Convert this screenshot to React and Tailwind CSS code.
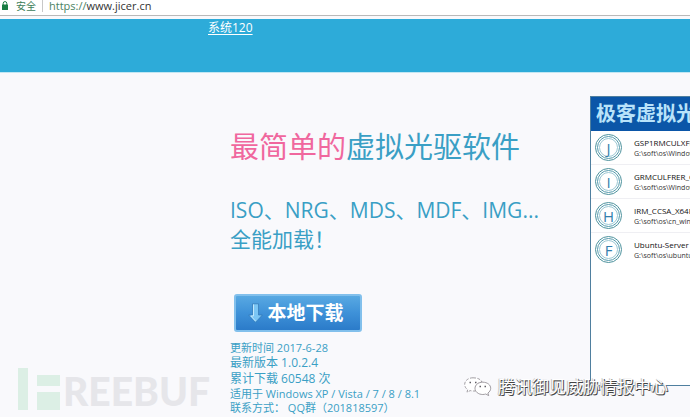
import React from 'react';

const images = [
  { letter: 'J', name: 'GSP1RMCULXFRER_CN_DVD', path: 'G:\\soft\\os\\Windows XP' },
  { letter: 'I', name: 'GRMCULFRER_CN_DVD', path: 'G:\\soft\\os\\Windows 7' },
  { letter: 'H', name: 'IRM_CCSA_X64FRE_CN', path: 'G:\\soft\\os\\cn_windows_8' },
  { letter: 'F', name: 'Ubuntu-Server 14.04', path: 'G:\\soft\\os\\ubuntu-14.04' },
];

function AddressBar() {
  return (
    <div className="flex h-4 items-start border-b border-[#b9b9b9] bg-white text-[11px] leading-3">
      <svg className="mt-px ml-[2px] h-[9px] w-[6px]" viewBox="0 0 6 9" aria-hidden="true">
        <path d="M1.2 4V2.4a1.8 1.8 0 0 1 3.6 0V4" fill="none" stroke="#187c43" />
        <rect y="3.5" width="6" height="5.5" rx=".5" fill="#187c43" />
      </svg>
      <span className="ml-2 text-[10px] text-[#3c8059]">安全</span>
      <span className="ml-[6px] h-3 w-px bg-[#c8c8c8]" />
      <span className="ml-[6px] text-[#333]">
        <span className="text-[#4b8363]">https://</span>www.jicer.cn
      </span>
    </div>
  );
}

function DownloadButton() {
  return (
    <button
      type="button"
      className="mt-10 ml-1 flex h-[38px] w-32 items-center justify-center gap-1 rounded-[3px] border-2 border-[#82c0ec] bg-linear-to-b from-[#58a9e2] from-0% via-[#3e91d8] via-50% to-[#2b7bc9] pr-1 text-[19px] leading-6 font-bold whitespace-nowrap text-white"
    >
      <svg className="h-5 w-[15px]" viewBox="0 0 15 20" aria-hidden="true">
        <path d="M4.5 .8h6V12h3.8l-6.800 7.400L.7 12h3.800z" fill="#7cc6f4" stroke="#3277b5" strokeWidth=".7" />
        <path d="M5.500 1.500V13H2.800l4.700 5" fill="none" stroke="#c2e8fc" strokeWidth="1" />
      </svg>
      本地下载
    </button>
  );
}

function DrivePanel() {
  return (
    <section className="mt-[23px] h-[290px] min-w-0 flex-1 overflow-hidden border border-r-0 border-[#4f7f9f] bg-white">
      <h2 className="h-[34px] bg-[#0b56a8] pl-[5px] text-[20px] leading-[33px] font-bold whitespace-nowrap text-[#b9e3fa]">
        极客虚拟光驱
      </h2>
      <ul>
        {images.map((image) => (
          <li key={image.letter} className="flex h-[34px] items-center border-b border-[#efeff3] pl-1 last:border-transparent">
            <span className="flex size-[27px] shrink-0 items-center justify-center rounded-full border border-[#4d929d] p-px">
              <span className="flex size-full items-center justify-center rounded-full border border-[#559bad] p-px">
                <span className="flex size-full items-center justify-center rounded-full border border-[#9cc8d4] text-[15px] leading-4 text-[#347fae]">
                  {image.letter}
                </span>
              </span>
            </span>
            <div className="ml-3 whitespace-nowrap">
              <p className="text-[8px] leading-3 font-medium text-[#111]">{image.name}</p>
              <p className="text-[7px] leading-[10px] text-[#333]">{image.path}</p>
            </div>
          </li>
        ))}
      </ul>
    </section>
  );
}

function FreebufMark() {
  return (
    <div className="pointer-events-none absolute bottom-[7px] left-[18px] flex h-[42px] items-center text-[#e6e6ea]">
      <svg className="h-[42px] w-[43px]" viewBox="0 0 43 42" fill="#dcefe5" aria-hidden="true">
        <path d="M0 0h10v42H0zM19 7h23v11H19zM19 24h23v18H19z" />
      </svg>
      <span className="ml-[2px] pt-1 font-['Lato','Liberation_Sans',sans-serif] text-[39px] leading-[42px] font-black">REEBUF</span>
    </div>
  );
}

function WechatMark() {
  return (
    <div className="pointer-events-none absolute right-[22px] bottom-5 flex items-center gap-[6px] whitespace-nowrap">
      <svg className="h-5 w-7" viewBox="0 0 28 20" fill="#fff" stroke="#8a858c" strokeWidth=".8" aria-hidden="true">
        <path d="M9 .8C4.300.8.7 3.700.7 7.400c0 2.200 1.100 4 3 5.200L3 15.200l3.200-1.600c1 .3 2 .4 3.200.4h2C10.800 9 14 5.300 18 5c-1-2.600-4.500-4.200-9-4.200z" strokeDasharray="3 1.500" />
        <path d="M18.800 5.200c-4.500 0-7.800 2.700-7.800 6.100s3.300 6.200 7.800 6.200c1 0 2-.2 2.900-.5l3 1.600-.8-2.600c1.700-1.100 2.800-2.800 2.800-4.700 0-3.400-3.400-6.100-7.900-6.100z" />
        <path d="M5.500 5.500h1.500M11 5.500h1.500M15.500 9.500H17M20.500 9.500H22" stroke="#625f66" strokeWidth="1.300" />
      </svg>
      <span className="text-[17px] leading-5 text-white [text-shadow:1px_1px_0_#444,0_1px_0_#777,-1px_0_0_#ccc]">腾讯御见威胁情报中心</span>
    </div>
  );
}

export default function App() {
  return (
    <div className="relative min-h-screen overflow-hidden bg-[#f9f9fc] font-['Open_Sans','Noto_Sans_CJK_SC',sans-serif]">
      <AddressBar />
      <header className="mt-[3px] h-[54px] border-b border-[#c3e7f3] bg-[#2dabd9] pl-[208px]">
        <a href="#system" className="block w-fit text-[12px] leading-[18px] text-white underline underline-offset-2">
          系统120
        </a>
      </header>
      <FreebufMark />
      <main className="relative flex items-start">
        <div className="w-[590px] shrink-0 pl-[230px] text-[#3a9fc5]">
          <h1 className="mt-[54px] text-[29px] leading-10 font-[390] whitespace-nowrap">
            <span className="text-[#f0679e]">最简单的</span>虚拟光驱软件
          </h1>
          <p className="mt-[29px] text-[21px] leading-[29px] font-[390] whitespace-nowrap">
            ISO、NRG、MDS、MDF、IMG...
            <br />
            全能加载！
          </p>
          <DownloadButton />
          <div className="mt-[9px] text-[11px] leading-[14px] font-[390] whitespace-nowrap">
            <p>更新时间 2017-6-28</p>
            <p className="text-[12px] leading-4">最新版本 1.0.2.4</p>
            <p className="text-[12px] leading-4">累计下载 60548 次</p>
            <p>适用于 Windows XP / Vista / 7 / 8 / 8.1</p>
            <p>联系方式： QQ群（201818597）</p>
          </div>
        </div>
        <DrivePanel />
      </main>
      <WechatMark />
    </div>
  );
}
